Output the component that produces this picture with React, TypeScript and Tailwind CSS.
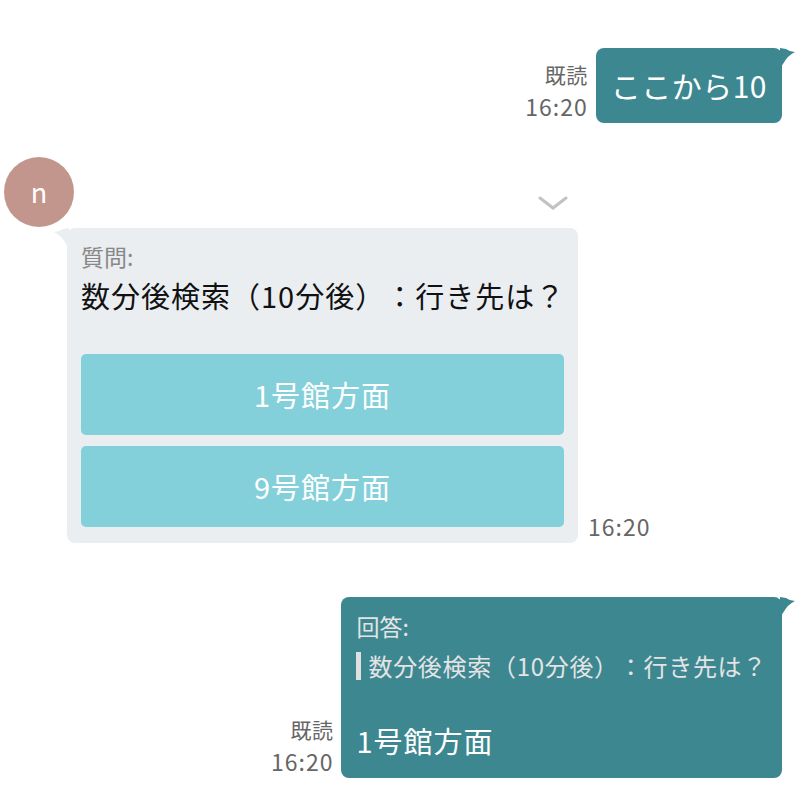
import React from "react";

const font = { fontFamily: '"Noto Sans CJK JP", "Noto Sans", sans-serif' };

const TailRight = ({ color }: { color: string }) => (
  <svg className="absolute top-0 -right-[14px]" width="16" height="20" viewBox="0 0 16 20">
    <path d="M0 0 L6 1 Q10 4 15 4 Q8 7 3 16 L0 20 Z" fill={color} />
  </svg>
);

const TailLeft = ({ color }: { color: string }) => (
  <svg className="absolute top-0 -left-[14px]" width="16" height="20" viewBox="0 0 16 20">
    <path d="M16 0 L10 1 Q6 4 1 4 Q8 7 13 16 L16 20 Z" fill={color} />
  </svg>
);

const Meta = ({ read }: { read?: boolean }) => (
  <div className="flex flex-col items-end leading-[1.45] text-[#666]">
    {read && <span className="text-[21px] tracking-[0.5px]">既読</span>}
    <span className="text-[23px] tracking-[1px]">16:20</span>
  </div>
);

const ChoiceButton = ({ label }: { label: string }) => (
  <button className="flex h-[81px] w-full items-center justify-center rounded-[5px] bg-[#83d0da] text-[29px] tracking-[1px] text-white">
    {label}
  </button>
);

export default function App() {
  return (
    <div className="min-h-[799px] w-[800px] bg-white pt-[48px] pr-[18px] [text-spacing-trim:space-all]" style={font}>
      {/* my message */}
      <div className="flex items-end justify-end gap-[8px]">
        <Meta read />
        <div className="relative rounded-[8px] bg-[#3d8791] px-[15px] py-[15px] text-[30px] leading-[45px] tracking-[0.5px] text-white">
          ここから10
          <TailRight color="#3d8791" />
        </div>
      </div>

      {/* incoming question */}
      <div className="mt-[34px] pl-[4px]">
        <div className="flex w-[564px] items-end justify-between">
          <div className="flex h-[70px] w-[70px] items-center justify-center rounded-full bg-[#c3968d] text-[27px] text-white">
            n
          </div>
          <svg className="mb-[16px]" width="30" height="16" viewBox="0 0 30 16">
            <path d="M2 3 L15 13 L28 3" fill="none" stroke="#c2c2c2" strokeWidth="3" strokeLinecap="round" />
          </svg>
        </div>
        <div className="mt-px flex items-end gap-[10px] pl-[63px]">
          <div className="relative w-[511px] rounded-[8px] bg-[#eaeef1] px-[14px] pt-[12px] pb-[16px]">
            <TailLeft color="#eaeef1" />
            <div className="text-[23px] leading-[33px] text-[#888]">質問:</div>
            <div className="whitespace-nowrap text-[29px] leading-[44px] tracking-[1px] text-[#111]">数分後検索（10分後）：行き先は？</div>
            <div className="mt-[37px] flex flex-col gap-[11px]">
              <ChoiceButton label="1号館方面" />
              <ChoiceButton label="9号館方面" />
            </div>
          </div>
          <Meta />
        </div>
      </div>

      {/* my answer */}
      <div className="mt-[54px] flex items-end justify-end gap-[8px]">
        <Meta read />
        <div className="relative rounded-[8px] bg-[#3d8791] px-[15px] pt-[13px] pb-[16px] text-white">
          <TailRight color="#3d8791" />
          <div className="text-[23px] leading-[33px] text-[#e4e4e4]">回答:</div>
          <div className="mt-[5px] flex items-center gap-[7px] whitespace-nowrap text-[24px] leading-[36px] tracking-[0.7px] text-[#e4e4e4]">
            <span className="h-[28px] w-[5px] bg-[#e0e0e0]" />
            数分後検索（10分後）：行き先は？
          </div>
          <div className="mt-[34px] text-[29px] leading-[44px] tracking-[1px]">1号館方面</div>
        </div>
      </div>
    </div>
  );
}
